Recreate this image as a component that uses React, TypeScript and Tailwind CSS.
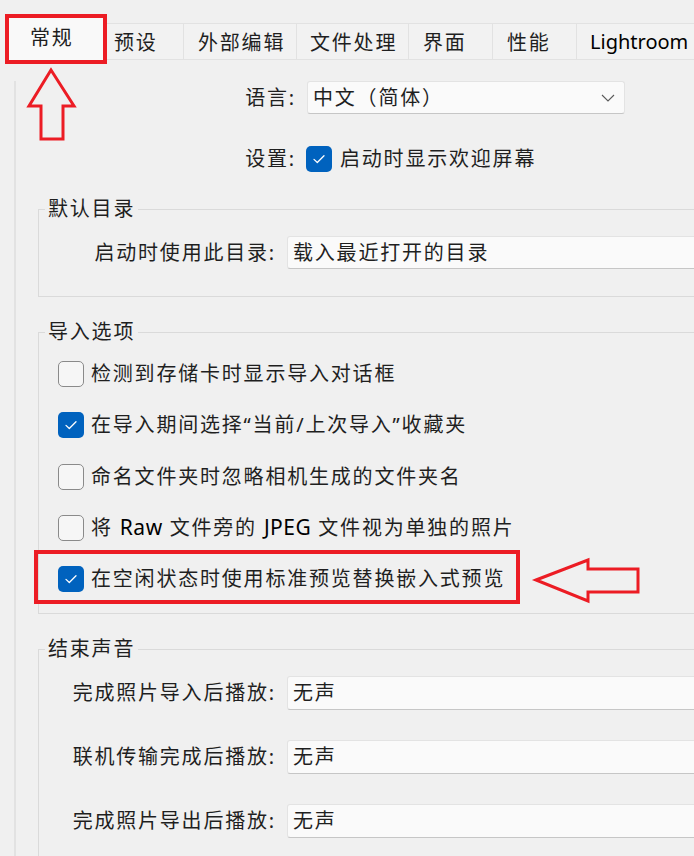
import React from "react";

const font = "font-['Noto_Sans','Noto_Sans_CJK_SC',sans-serif]";

const tabs = [
  { label: "预设", w: "w-[80px]", pl: "pl-[10px]" },
  { label: "外部编辑", w: "w-[113px]", pl: "pl-[14px]" },
  { label: "文件处理", w: "w-[112px]", pl: "pl-[13px]" },
  { label: "界面", w: "w-[84px]", pl: "pl-[14px]" },
  { label: "性能", w: "w-[84px]", pl: "pl-[14px]" },
];

const Check = ({ checked }: { checked: boolean }) =>
  checked ? (
    <div className="w-[26px] h-[26px] shrink-0 rounded-[5px] bg-[#0062be] flex items-center justify-center">
      <svg width="26" height="26" viewBox="0 0 26 26">
        <path d="M8 13.4 L11.3 16.5 L18 9.8" fill="none" stroke="white" strokeWidth="1.3" strokeLinecap="round" strokeLinejoin="round" />
      </svg>
    </div>
  ) : (
    <div className="w-[26px] h-[26px] shrink-0 rounded-[5px] border-[1.5px] border-[#8a8a8a] bg-[#f6f6f6]" />
  );

const Field = ({ text }: { text: string }) => (
  <div className="h-[34px] flex-1 flex items-center pl-[5px] bg-[#fafafa] border border-[#e3e3e3] border-b-[#c6c6c6] rounded-l-[3px]">
    {text}
  </div>
);

const Group = ({ title, className, children }: { title: string; className: string; children: React.ReactNode }) => (
  <div className={`relative ml-[22px] w-[680px] border border-r-0 border-[#dadada] ${className}`}>
    <span className="absolute left-[6px] -top-[15px] px-[3px] leading-[28px] bg-[#f0f0f0]">{title}</span>
    {children}
  </div>
);

const Row = ({ label, value }: { label: string; value: string }) => (
  <div className="flex items-center">
    <div className="w-[237px] text-right leading-[28px]">{label}</div>
    <div className="ml-[11px] flex-1 flex">
      <Field text={value} />
    </div>
  </div>
);

export default function App() {
  return (
    <div className={`relative w-[694px] h-[856px] overflow-hidden bg-[#f0f0f0] text-[#1f1f1f] text-[20px] tracking-[1.8px] ${font}`}>
      {/* tab strip */}
      <div className="flex items-start h-[63px] pl-[8px] pt-[18px]">
        <div className="w-[96px] h-[45px] bg-[#f9f9f9] pl-[22px] pt-[6px] leading-[28px]">常规</div>
        {tabs.map((t) => (
          <div
            key={t.label}
            className={`${t.w} ${t.pl} h-[37px] mt-[5px] pt-[5px] leading-[28px] bg-[#f2f2f2] border-y border-r border-[#e2e2e2]`}
          >
            {t.label}
          </div>
        ))}
        <div className="flex-1 h-[37px] mt-[5px] pl-[13px] pt-[4px] leading-[28px] tracking-normal text-[20px] bg-[#f2f2f2] border-y border-[#e2e2e2] text-black">
          Lightroom
        </div>
      </div>

      {/* panel */}
      <div className="ml-[14px] h-[793px] border-l-2 border-[#e2e2e2]">
        <div className="mt-[18px] h-[33px] flex items-center">
          <div className="w-[280px] text-right leading-[28px]">语言:</div>
          <div className="ml-[11px] w-[318px] h-[33px] flex items-center justify-between pl-[5px] pr-[9px] bg-[#fafafa] border border-[#e3e3e3] border-b-[#c6c6c6] rounded-[3px]">
            <span>中文（简体）</span>
            <svg width="14" height="8" viewBox="0 0 14 8">
              <path d="M1 1 L7 7 L13 1" fill="none" stroke="#5a5a5a" strokeWidth="1.1" />
            </svg>
          </div>
        </div>

        <div className="mt-[32px] h-[26px] flex items-center">
          <div className="w-[280px] text-right leading-[28px]">设置:</div>
          <div className="ml-[10px] flex items-center gap-[8px]">
            <Check checked />
            <span className="leading-[28px]">启动时显示欢迎屏幕</span>
          </div>
        </div>

        <Group title="默认目录" className="mt-[37px] pt-[26px] pb-[27px]">
          <div className="flex items-center">
            <div className="w-[237px] text-right leading-[28px]">启动时使用此目录:</div>
            <div className="ml-[11px] flex-1 h-[33px] flex items-center pl-[5px] bg-[#fafafa] border border-[#e3e3e3] border-b-[#c6c6c6] rounded-l-[3px]">
              载入最近打开的目录
            </div>
          </div>
        </Group>

        <Group title="导入选项" className="mt-[35px] pt-[28px] pb-[21px]">
          <div className="flex flex-col gap-[25.3px] pl-[19px]">
            {[
              { c: false, t: <>检测到存储卡时显示导入对话框</> },
              { c: true, t: <>在导入期间选择“当前/上次导入”收藏夹</> },
              { c: false, t: <>命名文件夹时忽略相机生成的文件夹名</> },
              {
                c: false,
                t: (
                  <>
                    将 <span className="tracking-[0.5px] text-[21px] text-black">Raw</span> 文件旁的{" "}
                    <span className="tracking-[0.5px] text-[21px] text-black">JPEG</span> 文件视为单独的照片
                  </>
                ),
              },
              { c: true, t: <>在空闲状态时使用标准预览替换嵌入式预览</> },
            ].map((r, i) => (
              <div key={i} className="h-[26px] flex items-center gap-[7px]">
                <Check checked={r.c} />
                <span className="leading-[28px] whitespace-nowrap">{r.t}</span>
              </div>
            ))}
          </div>
        </Group>

        <Group title="结束声音" className="mt-[35px] pt-[26px] pb-[40px]">
          <div className="flex flex-col gap-[30px]">
            <Row label="完成照片导入后播放:" value="无声" />
            <Row label="联机传输完成后播放:" value="无声" />
            <Row label="完成照片导出后播放:" value="无声" />
          </div>
        </Group>
      </div>

      {/* red annotations */}
      <div className="absolute left-[5px] top-[14px] w-[102px] h-[50px] border-[4px] border-[#ec1c24]" />
      <div className="absolute left-[34px] top-[550px] w-[486px] h-[54px] border-[4px] border-[#ec1c24]" />
      <svg className="absolute left-0 top-0" width="694" height="856">
        <polygon
          points="51,70 29,106 41,106 41,139 63,139 63,106 74,106"
          fill="none"
          stroke="#ec1c24"
          strokeWidth="3"
        />
        <polygon
          points="536,580 588,560 588,569 638,569 638,592 588,592 588,601"
          fill="none"
          stroke="#ec1c24"
          strokeWidth="3"
        />
      </svg>
    </div>
  );
}
